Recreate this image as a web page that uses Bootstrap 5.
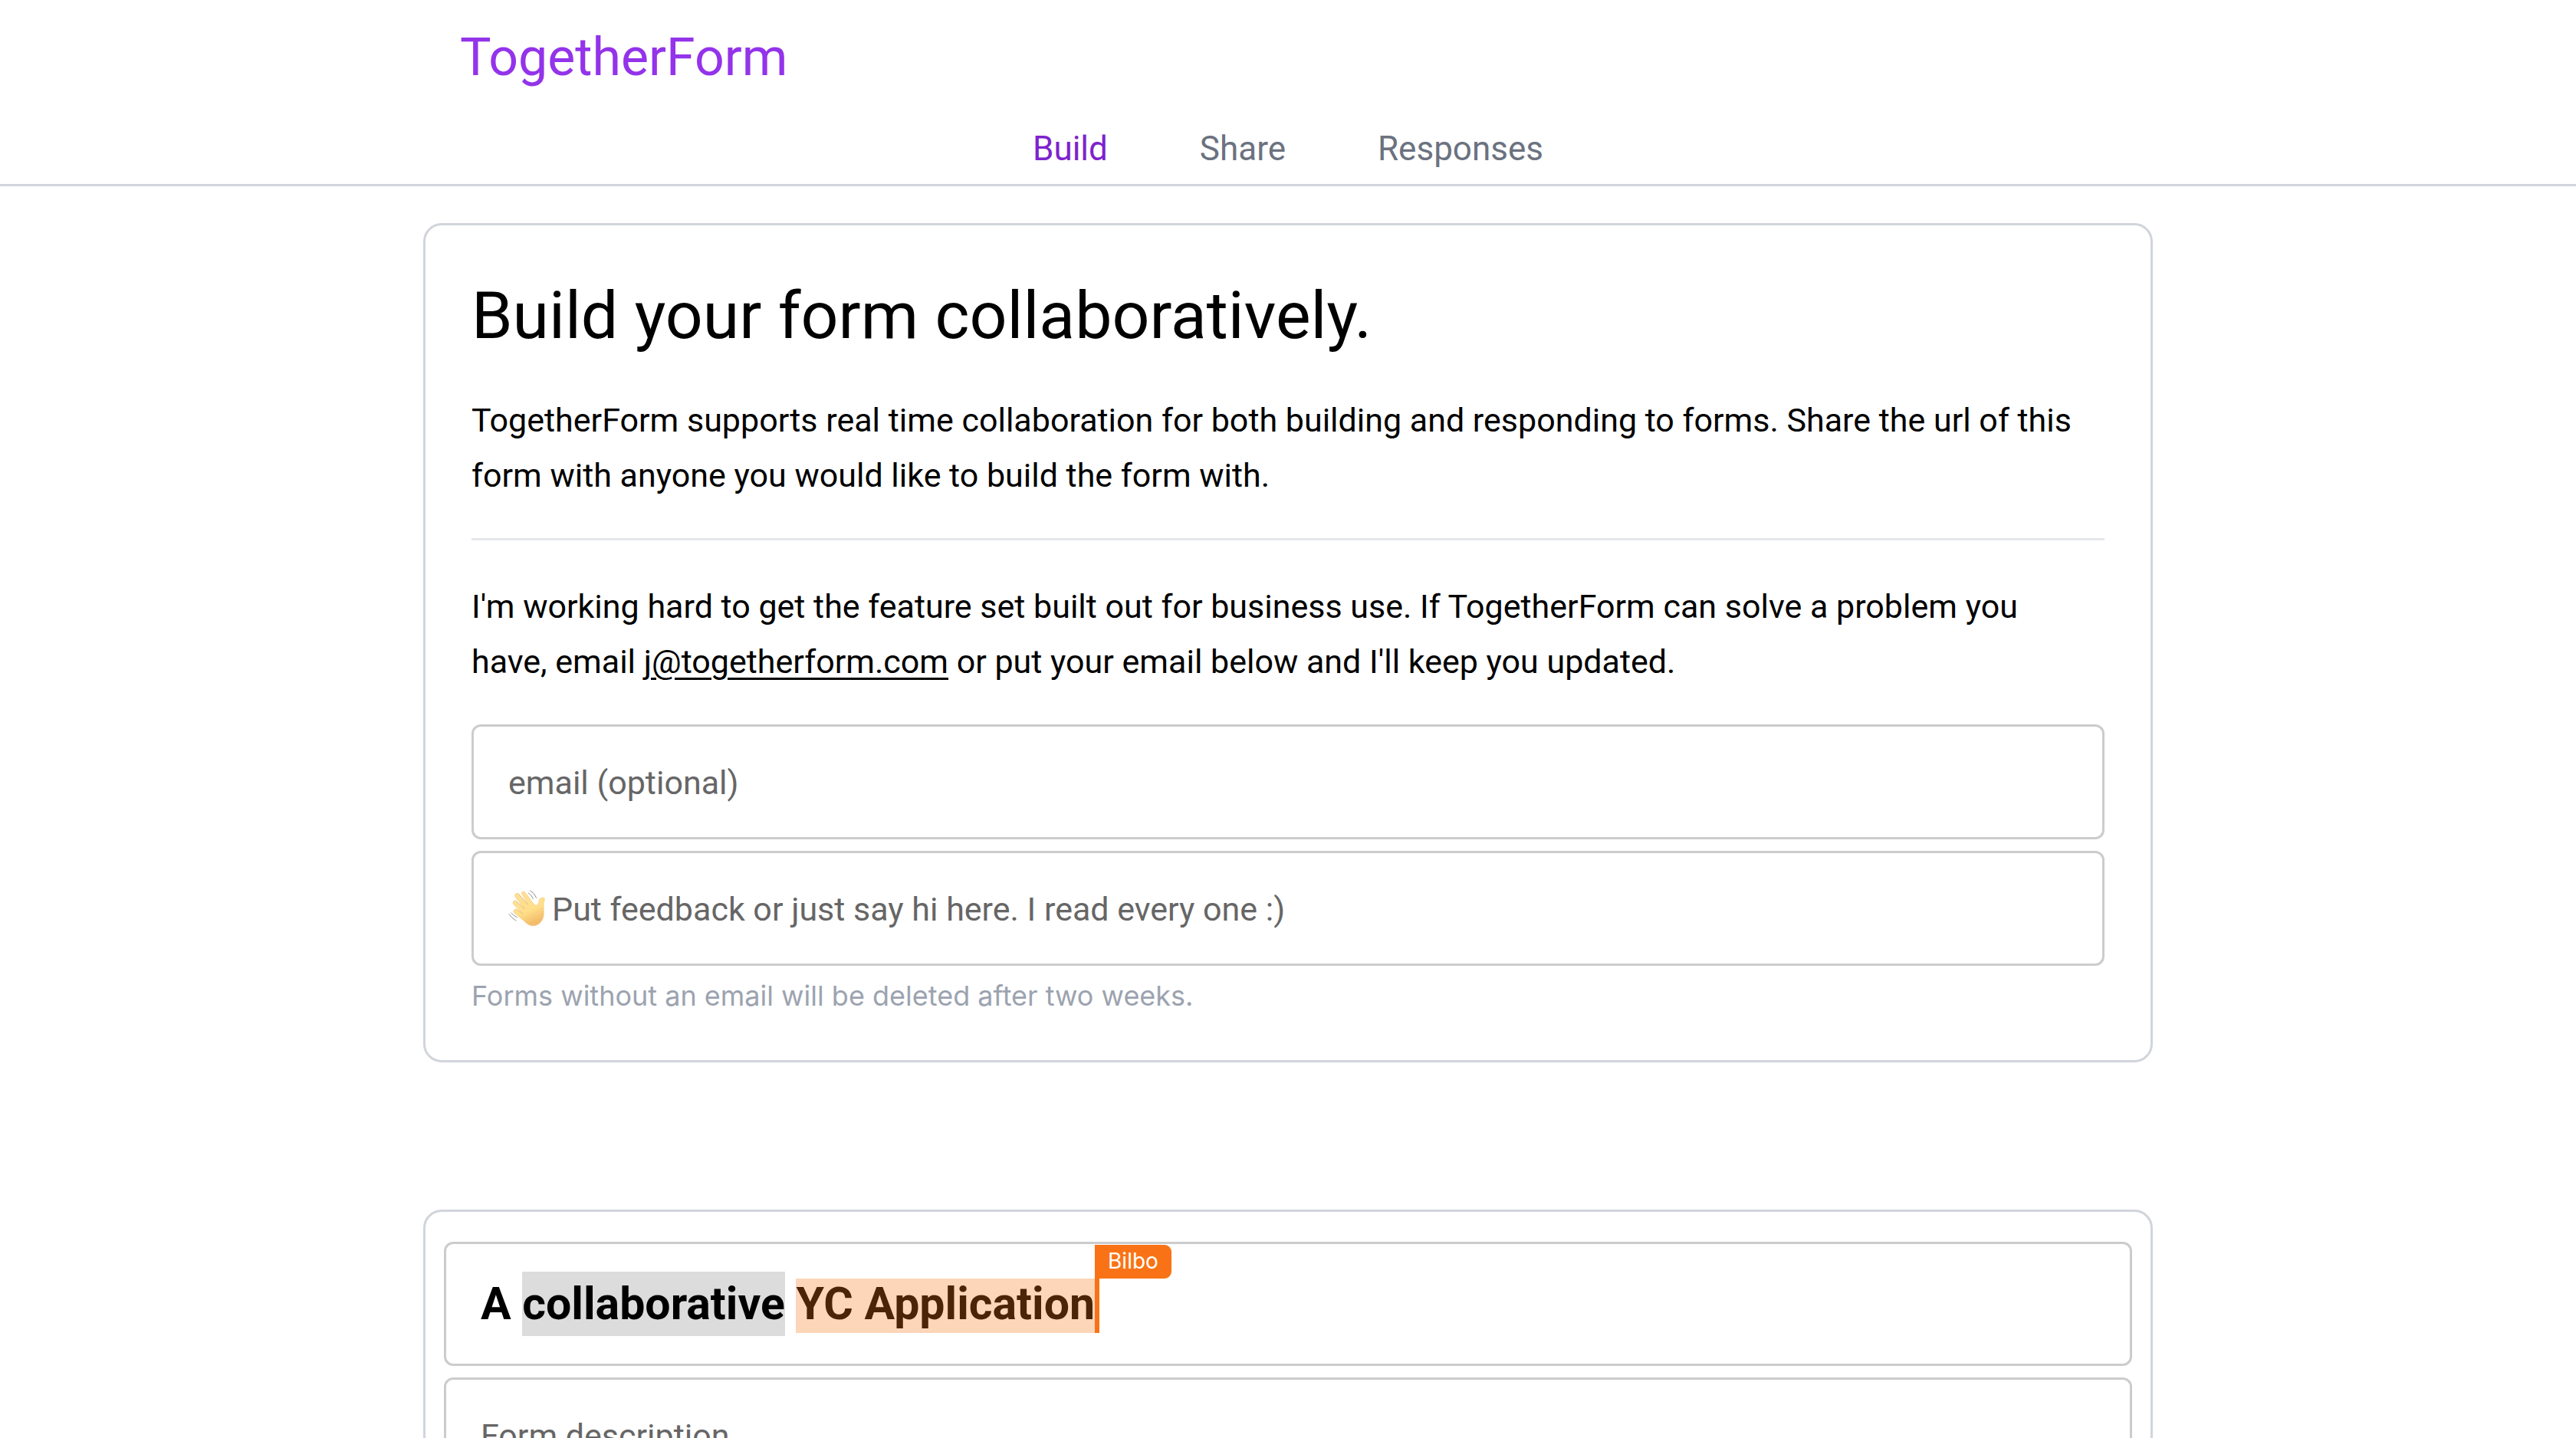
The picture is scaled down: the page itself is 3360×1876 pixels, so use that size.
<!DOCTYPE html>
<html lang="en">
<head>
<meta charset="utf-8">
<meta name="viewport" content="width=device-width, initial-scale=1">
<title>TogetherForm</title>
<link rel="stylesheet" href="https://cdn.jsdelivr.net/npm/bootstrap@5.3.0/dist/css/bootstrap.min.css">
<style>
  body { font-family: Roboto, "Liberation Sans", sans-serif; font-size: 43px; line-height: 72px; color: #000; background: #fff; }
  .wrap { width: 100%; max-width: 2256px; margin: 0 auto; }
  .site-head { border-bottom: 3px solid #d1d5db; padding: 33px 0 10px; margin-bottom: 48px; }
  .brand { display: inline-block; margin: 0 48px 41px; font-size: 68px; line-height: 84px; color: #9333ea; text-decoration: none; vertical-align: top; }
  .tabs { gap: 120px; font-size: 44px; }
  .tabs .nav-link { padding: 0; color: #6b7280; }
  .tabs .nav-link.active { color: #7e22ce; }
  .panel { border: 3px solid #d1d5db; border-radius: 24px; }
  .panel-intro { padding: 60px; margin-bottom: 192px; }
  .panel-form { padding: 39px 24px; }
  .panel h1 { font-size: 86px; line-height: 116px; font-weight: 400; margin: 0 0 40px; }
  .panel p { padding-top: 2px; margin: 0 0 46px; }
  .panel p a { color: #000; text-decoration-thickness: 3px; text-underline-offset: 6px; }
  .panel hr { border: 0; border-top: 3px solid #e5e7eb; opacity: 1; margin: 0 0 48px; }
  .stack { gap: 15px; }
  .field { border: 3px solid #ccc; border-radius: 12px; padding: 37px 45px 35px; font-size: 43px; line-height: 72px; height: 150px; color: #000; background: #fff; }
  .field::placeholder { color: #666; opacity: 1; }
  .field-wave { padding-left: 102px; }
  .wave { left: 47px; top: 49px; width: 50px; height: 50px; }
  .note { font-family: Inter, sans-serif; font-size: 36px; line-height: 48px; color: #9ca3af; }
  .form-title { border: 3px solid #ccc; border-radius: 12px; padding: 36px 45px; font-size: 59px; line-height: 84px; font-weight: 700; }
  .sel { display: inline-block; }
  .sel-own { background: #dcdcdc; }
  .sel-peer::after { content: ""; position: absolute; inset: 9px 0 4px 0; background: rgba(249,115,22,.3); }
  .caret { position: absolute; left: 100%; top: -35px; bottom: 4px; width: 6px; background: #f97316; z-index: 1; }
  .peer-name { position: absolute; left: 0; top: 0; height: 44px; padding: 0 17px; border-radius: 0 9px 9px 0; background: #f97316; color: #fff; font: 400 28px/42px Inter, sans-serif; }
</style>
<script src="https://cdn.jsdelivr.net/npm/bootstrap@5.3.0/dist/js/bootstrap.bundle.min.js"></script>
</head>
<body class="vh-100 overflow-hidden">
<header class="site-head">
  <div class="wrap">
    <a class="brand" href="#">TogetherForm</a>
    <nav class="nav tabs justify-content-center">
      <a class="nav-link active" href="#build" aria-current="page">Build</a>
      <a class="nav-link" href="#share">Share</a>
      <a class="nav-link" href="#responses">Responses</a>
    </nav>
  </div>
</header>
<main class="wrap">
  <section class="panel panel-intro">
    <h1>Build your form collaboratively.</h1>
    <p>TogetherForm supports real time collaboration for both building and responding to forms. Share the url of this form with anyone you would like to build the form with.</p>
    <hr>
    <p>I'm working hard to get the feature set built out for business use. If TogetherForm can solve a problem you <br>have, email <a href="mailto:j@togetherform.com">j@togetherform.com</a> or put your email below and I'll keep you updated.</p>
    <div class="stack d-flex flex-column">
      <input class="field form-control" type="email" aria-label="email (optional)" placeholder="email (optional)">
      <div class="position-relative">
        <input class="field field-wave form-control" type="text" aria-label="Feedback" placeholder="Put feedback or just say hi here. I read every one :)">
        <svg class="wave position-absolute" viewBox="66 58 150 150" aria-hidden="true">
          <defs><linearGradient id="skin" x1="0" y1="0" x2="0.4" y2="1"><stop offset="0" stop-color="#fbe09a"/><stop offset=".65" stop-color="#ffdf8a"/><stop offset="1" stop-color="#f3bd6b"/></linearGradient></defs>
          <path d="M122 80C118 73 125 67 133 72C140 77 156 103 170 121C177 127 186 123 188 112C189 99 196 92 206 94C213 97 212 103 209 109C205 121 209 139 208 157C207 183 191 202 169 204C154 206 141 197 130 185L93 155C86 147 91 138 100 139L126 157L90 121C83 112 90 102 99 107L133 138L96 92C91 83 99 74 108 78L144 119Z" fill="url(#skin)" stroke="#f0c47c" stroke-width="1.5" stroke-linejoin="round"/>
          <path d="M99 107L133 138M108 78L144 121M100 139L126 157" fill="none" stroke="#e3b06a" stroke-width="2" stroke-linecap="round"/>
          <path d="M148 76Q160 83 166 98M155 67Q172 76 179 95M80 154Q89 166 103 171M72 159Q82 175 99 184" fill="none" stroke="#909090" stroke-width="3" stroke-linecap="round"/>
        </svg>
      </div>
      <div class="note">Forms without an email will be deleted after two weeks.</div>
    </div>
  </section>
  <section class="panel panel-form stack d-flex flex-column">
    <div class="form-title" role="textbox" contenteditable="true" spellcheck="false" aria-label="Form title">A <span class="sel sel-own">collaborative</span> <span class="sel sel-peer position-relative">YC Application<span class="caret" contenteditable="false"><span class="peer-name">Bilbo</span></span></span></div>
    <input class="field form-control" type="text" aria-label="Form description" placeholder="Form description">
  </section>
</main>
</body>
</html>
